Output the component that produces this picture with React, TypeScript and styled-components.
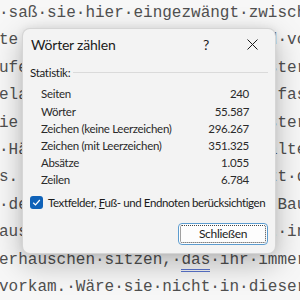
import React from 'react';
import styled, { createGlobalStyle } from 'styled-components';

const GlobalStyle = createGlobalStyle`
  html, body { margin: 0; padding: 0; }
  body { background: #f7f7f7; overflow: hidden; }
`;

const Page = styled.div`
  position: relative;
  width: 300px;
  height: 300px;
  overflow: hidden;
  background: #f7f7f7;
`;

const Doc = styled.div`
  font-family: "Liberation Mono", "Courier New", monospace;
  font-size: 16px;
  line-height: 27.4px;
  color: #505050;
  white-space: pre;
  margin-left: -1px;
`;

const DocLine = styled.div`
  height: 27.4px;
`;

const SplitLine = styled.div`
  height: 27.4px;
  width: 32ch;
  display: flex;
  justify-content: space-between;
`;

const Squiggle = styled.span`
  border-bottom: 3px double #5a74cc;
`;

const Dialog = styled.div`
  position: absolute;
  left: 22px;
  top: 28px;
  width: 254px;
  height: 226px;
  box-sizing: border-box;
  background: #f3f3f3;
  border: 1px solid rgba(0, 0, 0, 0.12);
  border-radius: 8px;
  box-shadow: 0 10px 30px rgba(0, 0, 0, 0.26), 0 0 8px rgba(0, 0, 0, 0.08);
  font-family: "Lato", "Noto Sans", sans-serif;
  letter-spacing: -0.3px;
  color: #1b1b1b;
  display: flex;
  flex-direction: column;
  white-space: nowrap;
`;

const TitleBar = styled.div`
  display: flex;
  align-items: center;
  height: 31px;
`;

const Title = styled.div`
  flex: 1;
  padding-left: 8px;
  font-size: 14px;
  letter-spacing: -0.2px;
`;

const CaptionButton = styled.div`
  width: 46px;
  height: 31px;
  display: flex;
  align-items: center;
  justify-content: center;
  font-size: 14px;
  color: #1b1b1b;
`;

const Body = styled.div`
  display: flex;
  flex-direction: column;
  padding: 5px 7px 0 7px;
  font-size: 11.5px;
`;

const GroupHeader = styled.div`
  display: flex;
  align-items: center;
  gap: 3px;
  line-height: 16px;
  &::after {
    content: "";
    flex: 1;
    height: 1px;
    background: #dadada;
    margin-top: -1px;
  }
`;

const Rows = styled.div`
  display: flex;
  flex-direction: column;
  padding: 4.4px 19px 0 11px;
`;

const Row = styled.div`
  display: flex;
  justify-content: space-between;
  height: 17.2px;
  line-height: 17.2px;
  color: #2a2a2a;
`;

const CheckRow = styled.label`
  display: flex;
  align-items: center;
  gap: 5px;
  margin-top: 6.4px;
  height: 16px;
  letter-spacing: -0.4px;
`;

const Box = styled.span`
  width: 13px;
  height: 13px;
  border-radius: 3px;
  background: #0f62b8;
  display: flex;
  align-items: center;
  justify-content: center;
  flex: none;
`;

const Footer = styled.div`
  display: flex;
  justify-content: flex-end;
  margin-top: 12px;
`;

const Button = styled.button`
  width: 90px;
  height: 22px;
  box-sizing: border-box;
  background: #fdfdfd;
  border: 1px solid #5c9ccf;
  border-radius: 4px;
  font-family: inherit;
  letter-spacing: inherit;
  font-size: 12px;
  color: #1b1b1b;
  padding: 0;
  outline: 1px dotted #444;
  outline-offset: -3px;
`;

const middleLines: [string, string][] = [
  ['te', 'd·vo'],
  ['ufe', 'ster'],
  ['ela', '·fas'],
  ['ie', 'ster'],
  ['·Hä', 'älte'],
  ['s.', 'zt·d'],
  ['·de', '·Bau'],
  ['aus', 't·in'],
];

const stats: [string, string][] = [
  ['Seiten', '240'],
  ['Wörter', '55.587'],
  ['Zeichen (keine Leerzeichen)', '296.267'],
  ['Zeichen (mit Leerzeichen)', '351.325'],
  ['Absätze', '1.055'],
  ['Zeilen', '6.784'],
];

export default function App() {
  return (
    <Page>
      <GlobalStyle />
      <Doc>
        <DocLine>·saß·sie·hier·eingezwängt·zwisch</DocLine>
        {middleLines.map(([l, r], i) => (
          <SplitLine key={i}>
            <span>{l}</span>
            <span>{r}</span>
          </SplitLine>
        ))}
        <DocLine>
          erhäuschen·sitzen,·<Squiggle>das</Squiggle>·ihr·immer
        </DocLine>
        <DocLine>vorkam.·Wäre·sie·nicht·in·dieser</DocLine>
      </Doc>
      <Dialog>
        <TitleBar>
          <Title>Wörter zählen</Title>
          <CaptionButton>?</CaptionButton>
          <CaptionButton>
            <svg width="11" height="11" viewBox="0 0 11 11">
              <path d="M0.5 0.5 L10.5 10.5 M10.5 0.5 L0.5 10.5" stroke="#1b1b1b" strokeWidth="1" />
            </svg>
          </CaptionButton>
        </TitleBar>
        <Body>
          <GroupHeader>Statistik:</GroupHeader>
          <Rows>
            {stats.map(([k, v]) => (
              <Row key={k}>
                <span>{k}</span>
                <span>{v}</span>
              </Row>
            ))}
          </Rows>
          <CheckRow>
            <Box>
              <svg width="9" height="9" viewBox="0 0 9 9">
                <path d="M1.2 4.8 L3.5 7 L7.8 2" fill="none" stroke="#fff" strokeWidth="1.2" />
              </svg>
            </Box>
            <span>
              Textfelder, <u>F</u>uß- und Endnoten berücksichtigen
            </span>
          </CheckRow>
          <Footer>
            <Button>Schließen</Button>
          </Footer>
        </Body>
      </Dialog>
    </Page>
  );
}
